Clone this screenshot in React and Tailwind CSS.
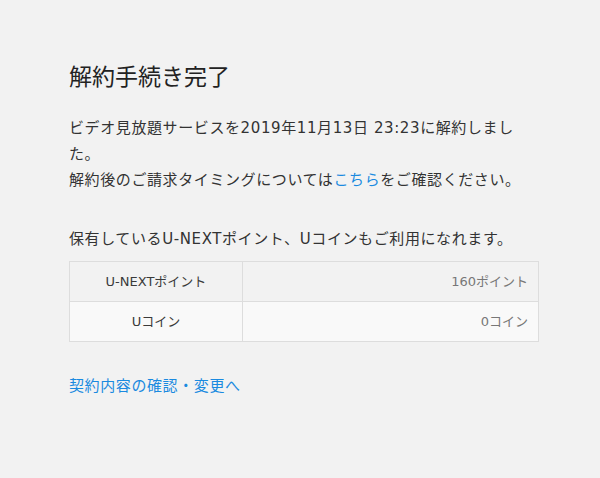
import React from "react";

const font = { fontFamily: '"DejaVu Sans", "Noto Sans CJK JP", sans-serif' };

export default function App() {
  return (
    <div className="w-[600px] h-[478px] bg-[#f2f2f2] text-[#333]" style={font}>
      <div className="pl-[69px] pr-[61px] pt-[62px]">
        {/* Heading */}
        <h1 className="text-[23px] leading-[30px] font-normal text-[#222]">解約手続き完了</h1>

        {/* Message */}
        <p className="mt-[23px] w-[462px] text-[15px] leading-[26px] tracking-[0.6px]">
          ビデオ見放題サービスを2019年11月13日 23:23に解約しました。
          <br />
          解約後のご請求タイミングについては
          <a className="text-[#1a8ae0]">こちら</a>
          をご確認ください。
        </p>

        <p className="mt-[33px] text-[15px] leading-[26px] tracking-[0.6px]">保有しているU-NEXTポイント、Uコインもご利用になれます。</p>

        {/* Points table */}
        <table className="mt-[9px] w-[470px] border-collapse text-[13px]">
          <tbody>
            <tr className="bg-[#f2f2f2]">
              <td className="w-[173px] h-[40px] border border-[#dddddd] text-center text-[#3a3a3a]">U-NEXTポイント</td>
              <td className="h-[40px] border border-[#dddddd] text-right pr-[10px] text-[#777]">160ポイント</td>
            </tr>
            <tr className="bg-[#f9f9f9]">
              <td className="h-[40px] border border-[#dddddd] text-center text-[#3a3a3a]">Uコイン</td>
              <td className="h-[40px] border border-[#dddddd] text-right pr-[10px] text-[#777]">0コイン</td>
            </tr>
          </tbody>
        </table>

        <a className="block mt-[31px] text-[15px] leading-[26px] tracking-[0.6px] text-[#1a8ae0]">契約内容の確認・変更へ</a>
      </div>
    </div>
  );
}
